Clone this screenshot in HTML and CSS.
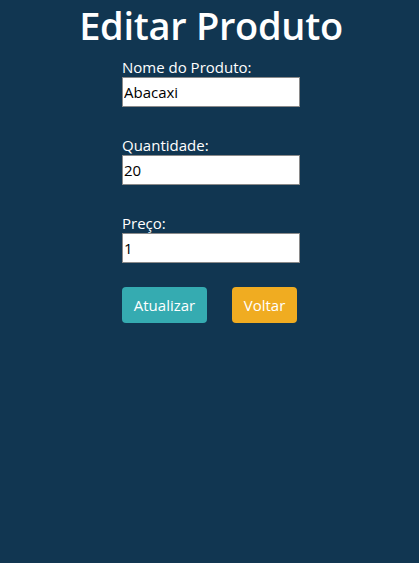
FILE: index.html
```html
<!DOCTYPE html>
<html lang="pt">
<head>
<meta charset="utf-8">
<title>Editar Produto</title>
<link rel="stylesheet" href="styles.css">
</head>
<body>
<main class="page">
  <h1 class="title">Editar Produto</h1>
  <form class="form">
    <div class="field">
      <label class="label" for="nome">Nome do Produto:</label>
      <input class="input" id="nome" type="text" value="Abacaxi">
    </div>
    <div class="field">
      <label class="label" for="qtd">Quantidade:</label>
      <input class="input" id="qtd" type="text" value="20">
    </div>
    <div class="field">
      <label class="label" for="preco">Preço:</label>
      <input class="input" id="preco" type="text" value="1">
    </div>
    <div class="actions">
      <button class="btn btn-update" type="button">Atualizar</button>
      <button class="btn btn-back" type="button">Voltar</button>
    </div>
  </form>
</main>
</body>
</html>
```

FILE: styles.css
```css
html, body {
  margin: 0;
  padding: 0;
  background: #113651;
  height: 100%;
}
body {
  font-family: "Open Sans", "Noto Sans", sans-serif;
  color: #ffffff;
}
.page {
  display: flex;
  flex-direction: column;
  align-items: center;
  padding-left: 3px;
}
.title {
  margin: 0;
  padding-top: 2px;
  font-size: 38px;
  font-weight: 600;
  line-height: 46px;
  letter-spacing: -0.3px;
}
.form {
  display: flex;
  flex-direction: column;
  width: 178px;
  margin-top: 9px;
}
.field {
  display: flex;
  flex-direction: column;
  margin-bottom: 28px;
}
.label {
  font-size: 15px;
  line-height: 20px;
  height: 20px;
}
.input {
  box-sizing: border-box;
  width: 178px;
  height: 30px;
  margin: 0;
  padding: 0 1px;
  border: 1px solid #8a8a8a;
  background: #ffffff;
  color: #000000;
  font-family: "Open Sans", "Noto Sans", sans-serif;
  font-size: 15px;
}
.actions {
  display: flex;
  gap: 25px;
  margin-top: -4px;
}
.btn {
  height: 36px;
  border: none;
  border-radius: 4px;
  color: #ffffff;
  font-family: "Open Sans", "Noto Sans", sans-serif;
  font-size: 15px;
  padding: 0 11px;
}
.btn-update {
  width: 85px;
  background: #35abb1;
}
.btn-back {
  width: 65px;
  background: #f0ac21;
}
```
